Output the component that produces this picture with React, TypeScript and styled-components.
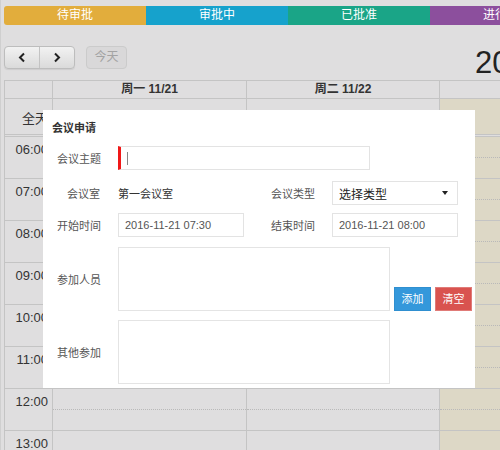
import React from 'react'
import styled, { createGlobalStyle } from 'styled-components'

const GlobalStyle = createGlobalStyle`
  html, body {
    margin: 0;
    padding: 0;
    background: #dfdedf;
    overflow: hidden;
  }
  body {
    font-family: "Liberation Sans", "Noto Sans CJK SC", sans-serif;
    color: #333;
  }
`

const Page = styled.div`
  position: relative;
  width: 500px;
  height: 450px;
  overflow: hidden;
  padding: 6px 0 0 3px;
  box-sizing: border-box;
  border-left: 1px solid #cfcfcf;
`

const StatusBar = styled.div`
  display: flex;
  height: 19px;
  width: 640px;
  border-radius: 3px 0 0 3px;
  overflow: hidden;
`

const Status = styled.div<{ $bg: string }>`
  width: 142px;
  flex: none;
  background: ${(p) => p.$bg};
  color: #fff;
  font-size: 12px;
  line-height: 19px;
  text-align: center;
`

const Toolbar = styled.div`
  display: flex;
  align-items: center;
  margin-top: 21px;
  height: 23px;
  white-space: nowrap;
`

const BtnGroup = styled.div`
  display: flex;
  flex: none;
  height: 23px;
  border: 1px solid #bdbdbd;
  border-radius: 4px;
  overflow: hidden;
  box-sizing: border-box;
  background: linear-gradient(#f2f2f2, #dadada);
  box-shadow: 0 1px 1px rgba(0, 0, 0, 0.08);
`

const NavBtn = styled.div`
  width: 34px;
  display: flex;
  align-items: center;
  justify-content: center;
  & + & {
    border-left: 1px solid #c3c3c3;
  }
`

const TodayBtn = styled.div`
  flex: none;
  margin-left: 11px;
  width: 41px;
  height: 23px;
  box-sizing: border-box;
  border: 1px solid #cbcbcb;
  border-radius: 4px;
  background: #d9d8d9;
  color: #a3a3a3;
  font-size: 12px;
  line-height: 21px;
  text-align: center;
`

const Title = styled.div`
  flex: none;
  margin-left: 348px;
  font-size: 31px;
  color: #222;
  line-height: 23px;
  padding-top: 9px;
`

const Calendar = styled.div`
  margin-top: 11px;
  border-left: 1px solid #c4c4c4;
  border-top: 1px solid #c4c4c4;
  width: 640px;
`

const Row = styled.div<{ $h: number; $double?: boolean }>`
  display: grid;
  grid-template-columns: 48px 194px 193px 1fr;
  height: ${(p) => p.$h}px;
  border-bottom: ${(p) => (p.$double ? '3px double #c4c4c4' : '1px solid #c4c4c4')};
  box-sizing: border-box;
`

const Cell = styled.div<{ $today?: boolean }>`
  border-right: 1px solid #c4c4c4;
  background: ${(p) => (p.$today ? '#ddd8c6' : 'transparent')};
  position: relative;
`

const HeadCell = styled(Cell)`
  font-size: 12px;
  font-weight: bold;
  text-align: center;
  line-height: 17px;
  color: #333;
`

const Gutter = styled.div<{ $center?: boolean }>`
  border-right: 1px solid #c4c4c4;
  font-size: 13px;
  color: #333;
  text-align: right;
  padding-right: 4px;
  padding-top: ${(p) => (p.$center ? '9px' : '5px')};
`

const HalfCell = styled(Cell)`
  &::after {
    content: '';
    position: absolute;
    left: 0;
    right: 0;
    top: 20px;
    border-top: 1px dotted #b9b9b9;
  }
`

const Dialog = styled.div`
  position: absolute;
  left: 42px;
  top: 110px;
  width: 432px;
  height: 278px;
  background: #fff;
  box-sizing: border-box;
  padding: 9px 0 0 14px;
  display: flex;
  flex-direction: column;
  font-size: 11px;
  color: #555;
`

const DialogTitle = styled.div`
  font-size: 11px;
  font-weight: bold;
  color: #333;
  margin-left: -5px;
  height: 27px;
`

const FormRow = styled.div<{ $gap: number }>`
  display: flex;
  align-items: center;
  margin-top: ${(p) => p.$gap}px;
`

const Label = styled.div<{ $w?: number; $ml?: number }>`
  width: ${(p) => p.$w ?? 43}px;
  margin-left: ${(p) => p.$ml ?? 0}px;
  margin-right: ${(p) => (p.$w ? 21 : 18)}px;
  text-align: right;
  white-space: nowrap;
  flex: none;
`

const Input = styled.div<{ $w: number; $required?: boolean }>`
  width: ${(p) => p.$w}px;
  height: 24px;
  box-sizing: border-box;
  border: 1px solid #e3e3e3;
  border-left: ${(p) => (p.$required ? '3px solid #f01818' : '1px solid #e3e3e3')};
  padding-left: 6px;
  display: flex;
  align-items: center;
  color: #555;
  font-size: 11px;
  flex: none;
`

const Caret = styled.div`
  width: 1px;
  height: 13px;
  background: #888;
`

const Static = styled.div`
  width: 126px;
  color: #333;
  flex: none;
`

const Select = styled(Input)`
  justify-content: space-between;
  padding: 0 9px 0 6px;
  color: #222;
  font-size: 12px;
`

const Arrow = styled.div`
  width: 0;
  height: 0;
  border-left: 3px solid transparent;
  border-right: 3px solid transparent;
  border-top: 4px solid #222;
`

const TextArea = styled.div`
  width: 272px;
  height: 64px;
  box-sizing: border-box;
  border: 1px solid #e4e4e4;
  flex: none;
`

const Buttons = styled.div`
  align-self: flex-end;
  display: flex;
  gap: 4px;
  margin-left: 4px;
`

const Button = styled.div<{ $bg: string; $bd: string }>`
  width: 37px;
  height: 24px;
  box-sizing: border-box;
  background: ${(p) => p.$bg};
  border: 1px solid ${(p) => p.$bd};
  color: #fff;
  font-size: 11px;
  line-height: 22px;
  text-align: center;
`

const Chevron = ({ left }: { left?: boolean }) => (
  <svg width="8" height="11" viewBox="0 0 8 11">
    <path
      d={left ? 'M6 1.5 L2 5.5 L6 9.5' : 'M2 1.5 L6 5.5 L2 9.5'}
      fill="none"
      stroke="#222"
      strokeWidth="2"
    />
  </svg>
)

const statuses = [
  { label: '待审批', bg: '#e2ad3c' },
  { label: '审批中', bg: '#16a2cc' },
  { label: '已批准', bg: '#1aa587' },
  { label: '进行中', bg: '#8c4f9d' },
]

const hours = ['06:00', '07:00', '08:00', '09:00', '10:00', '11:00', '12:00', '13:00']

export default function App() {
  return (
    <Page>
      <GlobalStyle />
      <StatusBar>
        {statuses.map((s) => (
          <Status key={s.label} $bg={s.bg}>
            {s.label}
          </Status>
        ))}
      </StatusBar>
      <Toolbar>
        <BtnGroup>
          <NavBtn>
            <Chevron left />
          </NavBtn>
          <NavBtn>
            <Chevron />
          </NavBtn>
        </BtnGroup>
        <TodayBtn>今天</TodayBtn>
        <Title>2016年11月21日 — 27日</Title>
      </Toolbar>
      <Calendar>
        <Row $h={18}>
          <Cell />
          <HeadCell>周一 11/21</HeadCell>
          <HeadCell>周二 11/22</HeadCell>
          <HeadCell>周三 11/23</HeadCell>
        </Row>
        <Row $h={38} $double>
          <Gutter $center>全天</Gutter>
          <Cell />
          <Cell />
          <Cell $today />
        </Row>
        {hours.map((h) => (
          <Row key={h} $h={42}>
            <Gutter>{h}</Gutter>
            <HalfCell />
            <HalfCell />
            <HalfCell $today />
          </Row>
        ))}
      </Calendar>
      <Dialog>
        <DialogTitle>会议申请</DialogTitle>
        <FormRow $gap={0}>
          <Label>会议主题</Label>
          <Input $w={252} $required>
            <Caret />
          </Input>
        </FormRow>
        <FormRow $gap={11}>
          <Label>会议室</Label>
          <Static>第一会议室</Static>
          <Label $w={40} $ml={27}>
            会议类型
          </Label>
          <Select $w={126}>
            选择类型
            <Arrow />
          </Select>
        </FormRow>
        <FormRow $gap={8}>
          <Label>开始时间</Label>
          <Input $w={126}>2016-11-21 07:30</Input>
          <Label $w={40} $ml={27}>
            结束时间
          </Label>
          <Input $w={126}>2016-11-21 08:00</Input>
        </FormRow>
        <FormRow $gap={10}>
          <Label>参加人员</Label>
          <TextArea />
          <Buttons>
            <Button $bg="#3498db" $bd="#2f8fd0">
              添加
            </Button>
            <Button $bg="#d9534f" $bd="#e07b78">
              清空
            </Button>
          </Buttons>
        </FormRow>
        <FormRow $gap={9}>
          <Label>其他参加</Label>
          <TextArea />
        </FormRow>
      </Dialog>
    </Page>
  )
}
